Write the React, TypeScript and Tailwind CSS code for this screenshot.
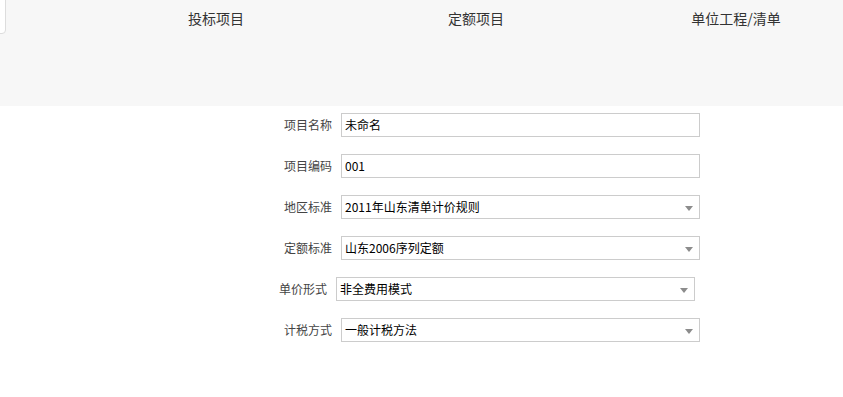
import React from "react";

const font = { fontFamily: '"Microsoft YaHei", "Noto Sans CJK SC", "Noto Sans", sans-serif' };

function Arrow() {
  return (
    <svg width="8" height="5" viewBox="0 0 8 5" className="absolute right-[6px] top-[10px]">
      <path d="M0 0 H8 L4 5 Z" fill="#8c8c8c" />
    </svg>
  );
}

function Row({
  label,
  value,
  select,
  shift,
}: {
  label: string;
  value: string;
  select?: boolean;
  shift?: boolean;
}) {
  return (
    <div className={`flex items-center h-[24px] ${shift ? "ml-[-5px]" : ""}`}>
      <div className="w-[80px] pr-[9px] text-right text-[12px] text-[#444] leading-[24px]">{label}</div>
      <div className="relative w-[359px] h-[24px] border border-[#cccccc] bg-white pl-[3px] text-[12px] text-black leading-[22px]">
        {value}
        {select && <Arrow />}
      </div>
    </div>
  );
}

export default function App() {
  return (
    <div className="w-[843px] h-[397px] bg-white overflow-hidden" style={font}>
      <div className="relative h-[106px] bg-[#f7f7f7]">
        <div className="absolute left-[-10px] top-[-5px] w-[16px] h-[39px] bg-white border border-[#dddddd] rounded-br-[4px]" />
        <div className="flex pl-[86px] pt-[8px]">
          <div className="w-[260px] shrink-0 text-center text-[14px] text-[#333] leading-[20px]">投标项目</div>
          <div className="w-[260px] shrink-0 text-center text-[14px] text-[#333] leading-[20px]">定额项目</div>
          <div className="w-[260px] shrink-0 text-center text-[14px] text-[#333] leading-[20px]">单位工程/清单</div>
        </div>
      </div>
      <div className="flex flex-col gap-[17px] pt-[7px] pl-[261px]">
        <Row label="项目名称" value="未命名" />
        <Row label="项目编码" value="001" />
        <Row label="地区标准" value="2011年山东清单计价规则" select />
        <Row label="定额标准" value="山东2006序列定额" select />
        <Row label="单价形式" value="非全费用模式" select shift />
        <Row label="计税方式" value="一般计税方法" select />
      </div>
    </div>
  );
}
